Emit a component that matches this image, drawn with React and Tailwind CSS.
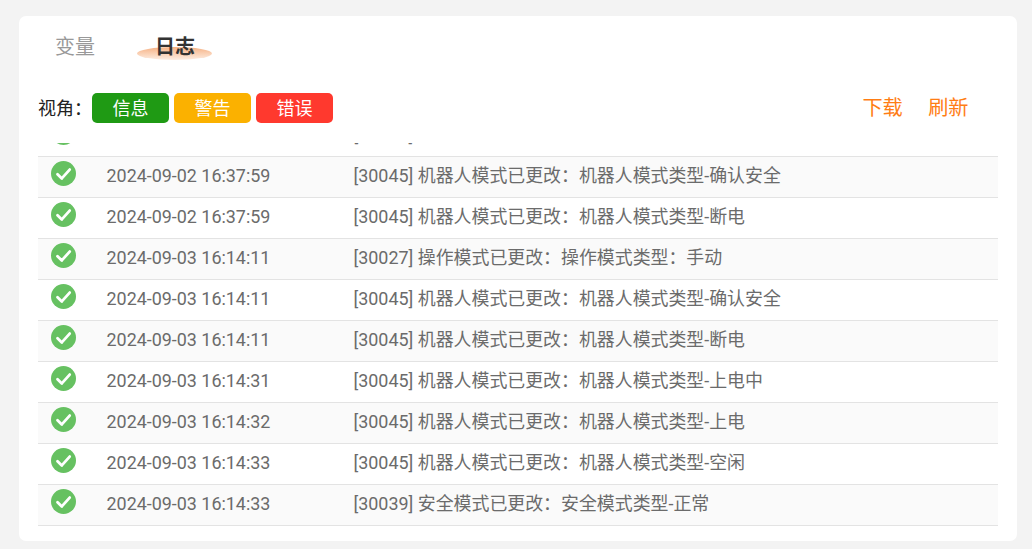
const rows = [
  ["2024-09-02 16:37:59", "[30039] 安全模式已更改：安全模式类型-正常"],
  ["2024-09-02 16:37:59", "[30045] 机器人模式已更改：机器人模式类型-确认安全"],
  ["2024-09-02 16:37:59", "[30045] 机器人模式已更改：机器人模式类型-断电"],
  ["2024-09-03 16:14:11", "[30027] 操作模式已更改：操作模式类型：手动"],
  ["2024-09-03 16:14:11", "[30045] 机器人模式已更改：机器人模式类型-确认安全"],
  ["2024-09-03 16:14:11", "[30045] 机器人模式已更改：机器人模式类型-断电"],
  ["2024-09-03 16:14:31", "[30045] 机器人模式已更改：机器人模式类型-上电中"],
  ["2024-09-03 16:14:32", "[30045] 机器人模式已更改：机器人模式类型-上电"],
  ["2024-09-03 16:14:33", "[30045] 机器人模式已更改：机器人模式类型-空闲"],
  ["2024-09-03 16:14:33", "[30039] 安全模式已更改：安全模式类型-正常"],
];

function Check() {
  return (
    <svg width="25" height="25" viewBox="0 0 25 25" className="block">
      <circle cx="12.5" cy="12.5" r="12.5" fill="#66c161" />
      <path d="M6.5 13.2l4.3 4.2 7.9-8.8" fill="none" stroke="#fff" strokeWidth="2.8" strokeLinecap="round" strokeLinejoin="round" />
    </svg>
  );
}

function Btn({ color, children }) {
  return (
    <div className={`w-[77px] h-[30px] rounded-[5px] flex items-center justify-center text-white text-[18px] ${color}`}>
      {children}
    </div>
  );
}

export default function App() {
  return (
    <div
      className="w-[1032px] h-[549px] bg-[#f3f3f3] pt-[16px] pl-[19px] overflow-hidden"
      style={{ fontFamily: 'Roboto, "Noto Sans CJK SC", sans-serif' }}
    >
      <div className="w-[998px] h-[525px] bg-white rounded-[7px] pl-[19px] pr-[19px] flex flex-col">
        <div className="h-[60px] flex items-start pt-[16px] text-[20px] leading-[30px]">
          <div className="ml-[17px] text-[#999999]">变量</div>
          <div className="relative ml-[60px] font-bold text-[#333333]">
            <div className="absolute left-[-18px] top-[15px] w-[75px] h-[13px] rounded-[50%] bg-gradient-to-b from-[#f5b183] to-[#fdeee3]" />
            <span className="relative">日志</span>
          </div>
        </div>
        <div className="h-[30px] mt-[17px] flex items-center">
          <div className="w-[54px] text-[18px] text-[#222222]">视角：</div>
          <div className="flex gap-[5px]">
            <Btn color="bg-[#1f9a14]">信息</Btn>
            <Btn color="bg-[#fbb100]">警告</Btn>
            <Btn color="bg-[#ff392e]">错误</Btn>
          </div>
          <div className="ml-auto mr-[29.5px] flex gap-[25.5px] text-[20.16px] text-[#ff7d14]">
            <span>下载</span>
            <span>刷新</span>
          </div>
        </div>
        <div className="mt-[20px] h-[383px] overflow-hidden">
          <div className="-mt-[27px]">
            {rows.map((r, i) => (
              <div
                key={i}
                className={`h-[41px] border-b border-[#e3e3e3] flex items-start text-[17.92px] leading-[38px] text-[#6b6b6b] ${i % 2 === 1 ? "bg-[#fafafa]" : "bg-white"}`}
              >
                <div className="w-[68.5px] pl-[13px] pt-[4px] shrink-0">
                  <Check />
                </div>
                <div className="w-[247px] shrink-0">{r[0]}</div>
                <div>{r[1]}</div>
              </div>
            ))}
          </div>
        </div>
      </div>
    </div>
  );
}
